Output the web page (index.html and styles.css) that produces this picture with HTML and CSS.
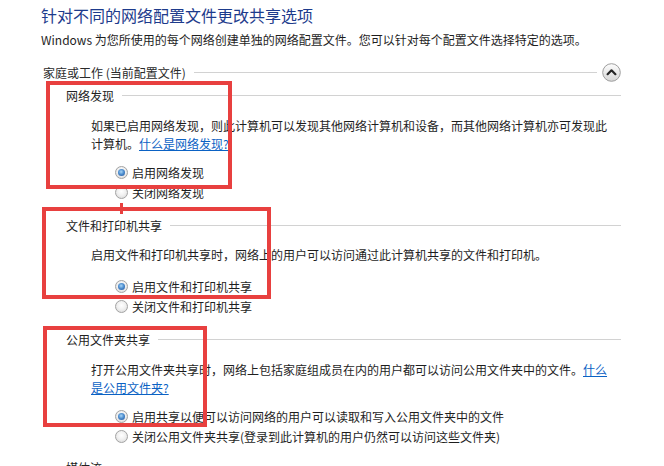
FILE: index.html
```html
<!DOCTYPE html>
<html lang="zh-CN">
<head>
<meta charset="utf-8">
<title>高级共享设置</title>
<link rel="stylesheet" href="styles.css">
</head>
<body>
<div class="page">
  <h1 class="title">针对不同的网络配置文件更改共享选项</h1>
  <p class="intro">Windows 为您所使用的每个网络创建单独的网络配置文件。您可以针对每个配置文件选择特定的选项。</p>

  <div class="group-head">
    <span class="group-name">家庭或工作 (当前配置文件)</span>
    <span class="rule"></span>
    <span class="toggle">
      <svg width="19" height="19" viewBox="0 0 19 19">
        <defs>
          <linearGradient id="tg" x1="0" y1="0" x2="0" y2="1">
            <stop offset="0" stop-color="#fdfdfd"/>
            <stop offset="1" stop-color="#d6d6d6"/>
          </linearGradient>
        </defs>
        <circle cx="9.5" cy="9.5" r="8.8" fill="url(#tg)" stroke="#9d9d9d" stroke-width="1"/>
        <path d="M5.6 11.2 L9.5 7.3 L13.4 11.2" fill="none" stroke="#262626" stroke-width="2.2" stroke-linecap="round" stroke-linejoin="round"/>
      </svg>
    </span>
  </div>

  <section class="sec sec-first">
    <div class="sec-head"><span class="sec-name">网络发现</span><span class="rule"></span></div>
    <p class="desc">如果已启用网络发现，则此计算机可以发现其他网络计算机和设备，而其他网络计算机亦可发现此计算机。<a href="#">什么是网络发现?</a></p>
    <div class="options">
      <div class="opt"><span class="radio on"></span>启用网络发现</div>
      <div class="opt"><span class="radio"></span>关闭网络发现</div>
    </div>
  </section>

  <section class="sec sec-single">
    <div class="sec-head"><span class="sec-name">文件和打印机共享</span><span class="rule"></span></div>
    <p class="desc">启用文件和打印机共享时，网络上的用户可以访问通过此计算机共享的文件和打印机。</p>
    <div class="options">
      <div class="opt"><span class="radio on"></span>启用文件和打印机共享</div>
      <div class="opt"><span class="radio"></span>关闭文件和打印机共享</div>
    </div>
  </section>

  <section class="sec">
    <div class="sec-head"><span class="sec-name">公用文件夹共享</span><span class="rule"></span></div>
    <p class="desc">打开公用文件夹共享时，网络上包括家庭组成员在内的用户都可以访问公用文件夹中的文件。<a href="#">什么是公用文件夹?</a></p>
    <div class="options">
      <div class="opt"><span class="radio on"></span>启用共享以便可以访问网络的用户可以读取和写入公用文件夹中的文件</div>
      <div class="opt"><span class="radio"></span>关闭公用文件夹共享(登录到此计算机的用户仍然可以访问这些文件夹)</div>
    </div>
  </section>

  <section class="sec sec-last">
    <div class="sec-head"><span class="sec-name">媒体流</span><span class="rule"></span></div>
  </section>

  <div class="mark mark-1"></div>
  <div class="mark mark-2"></div>
  <div class="mark mark-3"></div>
  <div class="mark-tick"></div>
</div>
</body>
</html>
```

FILE: styles.css
```css
html, body {
  margin: 0;
  padding: 0;
  background: #ffffff;
  overflow: hidden;
}

body {
  font-family: "Noto Sans CJK SC", "Noto Sans", sans-serif;
  font-size: 12px;
  color: #1e1e1e;
}

.page {
  position: relative;
  width: 580px;
  height: 466px;
  padding: 5px 0 0 41px;
  box-sizing: content-box;
}

.title {
  margin: 0;
  font-size: 16px;
  line-height: 20px;
  font-weight: normal;
  color: #1d3b8c;
}

.intro {
  margin: 6px 0 0 0;
  line-height: 18px;
}

.group-head {
  display: flex;
  align-items: center;
  height: 20px;
  margin-top: 13px;
  padding-left: 2px;
}

.group-name {
  color: #2a2a2a;
  white-space: nowrap;
}

.rule {
  flex: 1;
  height: 1px;
  background: #d2d2d2;
  margin-left: 8px;
}

.toggle {
  display: flex;
  margin-left: 5px;
  width: 19px;
  height: 19px;
}

.sec-head {
  display: flex;
  align-items: center;
  height: 18px;
  margin-top: 14px;
  padding-left: 25px;
}

.sec-first .sec-head {
  margin-top: 4px;
}

.sec-last .sec-head {
  margin-top: 12px;
}

.sec-name {
  color: #222;
  white-space: nowrap;
}

.desc {
  margin: 13px 0 0 50px;
  width: 520px;
  line-height: 18px;
}

.sec-single .desc {
  margin-top: 12px;
}

.desc a {
  color: #0b62c4;
  text-decoration: underline;
}

.options {
  margin: 9px 0 0 74px;
}

.sec-single .options {
  margin-top: 12px;
}

.opt {
  display: flex;
  align-items: center;
  height: 20px;
  white-space: nowrap;
}

.radio {
  position: relative;
  flex: none;
  width: 13px;
  height: 13px;
  margin-right: 4px;
  box-sizing: border-box;
  border-radius: 50%;
  border: 1px solid #a3a3a3;
  background: radial-gradient(circle at 50% 40%, #ffffff 0%, #f1f1f1 45%, #d4d4d4 100%);
}

.radio.on::after {
  content: "";
  position: absolute;
  left: 2px;
  top: 2px;
  width: 7px;
  height: 7px;
  border-radius: 50%;
  background: radial-gradient(circle at 45% 40%, #a9d6f7 0%, #4f8fd0 45%, #1d4d94 100%);
}

.mark {
  position: absolute;
  box-sizing: border-box;
  border: 4px solid #e8403f;
}

.mark-1 {
  left: 46px;
  top: 81px;
  width: 186px;
  height: 108px;
}

.mark-2 {
  left: 42px;
  top: 207px;
  width: 229px;
  height: 92px;
}

.mark-3 {
  left: 43px;
  top: 326px;
  width: 164px;
  height: 101px;
}

.mark-tick {
  position: absolute;
  left: 120px;
  top: 203px;
  width: 3px;
  height: 11px;
  background: #e8403f;
}
```
